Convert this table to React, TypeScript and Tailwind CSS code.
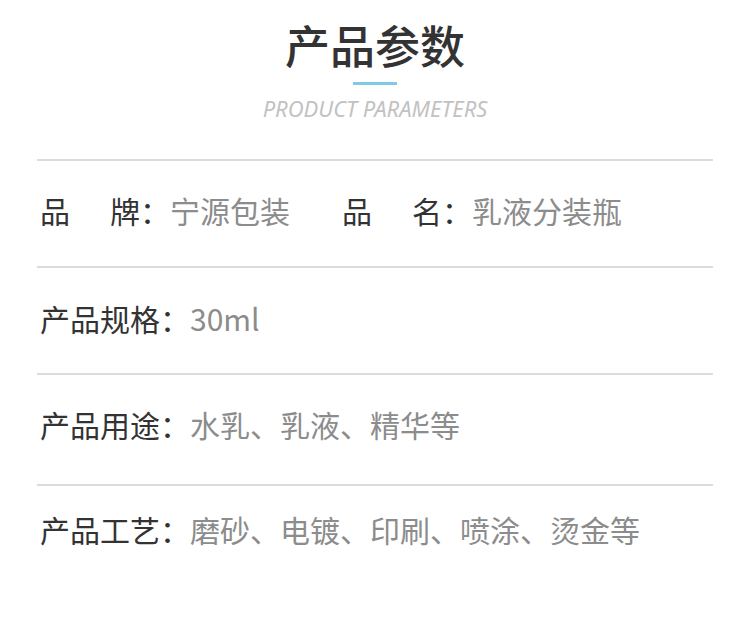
const rows = [
  { label: "产品规格", value: "30ml", h: "h-[107px]", pb: "pb-[6px]" },
  { label: "产品用途", value: "水乳、乳液、精华等", h: "h-[111px]", pb: "pb-[12px]" },
];

function Spread({ text }: { text: string }) {
  return (
    <span className="flex w-[100px] justify-between">
      {text.split("").map((c, i) => (
        <span key={i}>{c}</span>
      ))}
    </span>
  );
}

export default function App() {
  return (
    <main className="min-h-[641px] w-[750px] bg-white font-['Noto_Sans_CJK_SC',sans-serif] text-[#333]">
      <header className="flex flex-col items-center pt-[22px]">
        <h1 className="m-0 text-[45px] font-medium leading-none">产品参数</h1>
        <div className="mt-[15px] h-[3px] w-[44px] bg-[#7ecbe3]" />
        <p className="m-0 mt-[12px] font-['Noto_Sans',sans-serif] text-[22px] italic leading-none text-[#c2c2c2]">
          PRODUCT PARAMETERS
        </p>
      </header>

      <section className="mx-[37px] mt-[40px] text-[30px] leading-none">
        <div className="flex h-[107px] items-center border-t-2 border-[#dcdcdc] pb-[8px] pl-[3px]">
          <div className="flex w-[302px] items-center">
            <Spread text="品牌" />
            <span>：</span>
            <span className="text-[#8c8c8c]">宁源包装</span>
          </div>
          <div className="flex items-center">
            <Spread text="品名" />
            <span>：</span>
            <span className="text-[#8c8c8c]">乳液分装瓶</span>
          </div>
        </div>
        {rows.map((r) => (
          <div key={r.label} className={`flex ${r.h} ${r.pb} items-center border-t-2 border-[#dcdcdc] pl-[3px]`}>
            <span>{r.label}：</span>
            <span className="text-[#8c8c8c]">{r.value}</span>
          </div>
        ))}
        <div className="flex border-t-2 border-[#dcdcdc] pl-[3px] pt-[28px]">
          <span>产品工艺：</span>
          <span className="text-[#8c8c8c]">磨砂、电镀、印刷、喷涂、烫金等</span>
        </div>
      </section>
    </main>
  );
}
